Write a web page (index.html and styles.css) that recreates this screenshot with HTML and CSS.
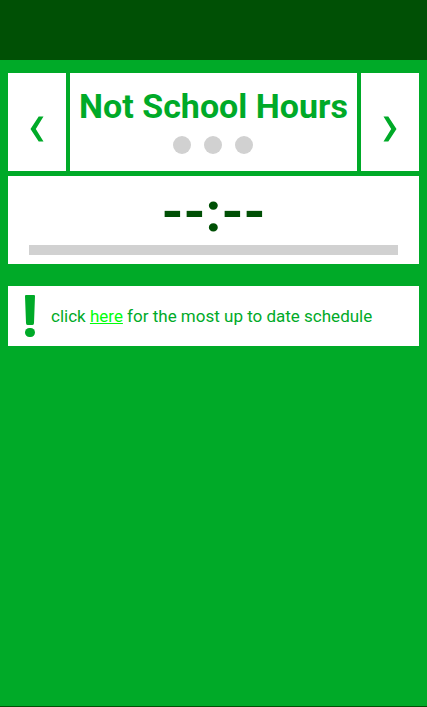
FILE: index.html
```html
<!DOCTYPE html>
<html lang="en">
<head>
<meta charset="utf-8">
<meta name="viewport" content="width=device-width, initial-scale=1">
<title>School Schedule</title>
<link rel="stylesheet" href="styles.css">
</head>
<body>
<header class="topbar"></header>
<main class="content">
  <section class="period">
    <button class="card nav" type="button" aria-label="Previous">
      <svg width="14" height="26" viewBox="0 0 14 26"><path d="M8.700 .5H13.500L5.800 13L13.500 25.500H8.700L.5 13Z"/></svg>
    </button>
    <div class="card current">
      <h1 class="title">Not School Hours</h1>
      <div class="dots"><span class="dot"></span><span class="dot"></span><span class="dot"></span></div>
    </div>
    <button class="card nav" type="button" aria-label="Next">
      <svg width="14" height="26" viewBox="0 0 14 26"><path d="M5.300 .5H.5L8.200 13L.5 25.500H5.300L13.500 13Z"/></svg>
    </button>
  </section>
  <section class="card timer">
    <div class="time">--:--</div>
    <div class="track"></div>
  </section>
  <section class="card notice">
    <svg class="alert" width="10" height="42" viewBox="0 0 10 42"><path d="M1 0H9Q10 0 10 1L9 28Q9 30 7.500 30H2.500Q1 30 1 28L0 1Q0 0 1 0Z"/><rect y="33" width="10" height="9" rx="4.500"/></svg>
    <p class="message">click <a class="link" href="#">here</a> for the most up to date schedule</p>
  </section>
</main>
<footer class="bottombar"></footer>
</body>
</html>
```
FILE: styles.css
```css
* { box-sizing: border-box; }

body {
  margin: 0;
  min-height: 100vh;
  display: flex;
  flex-direction: column;
  background: #00aa28;
  color: #00aa28;
  font-family: Roboto, sans-serif;
}

.topbar { height: 60px; background: #005005; }

.content { flex: 1; padding: 13px 8px; }

.card { background: #fff; }

.period {
  display: grid;
  grid-template-columns: 1fr 5fr 1fr;
  gap: 4px;
  margin-bottom: 5px;
}

.nav {
  display: flex;
  align-items: center;
  justify-content: center;
  border: 0;
  padding: 13px 0 0;
  color: inherit;
}

.nav svg, .alert { fill: currentColor; }

.current {
  padding: 13px 0 17px;
  text-align: center;
}

.title {
  margin: 0;
  font-size: 34px;
  line-height: 40px;
  font-weight: 700;
  white-space: nowrap;
}

.dots {
  display: flex;
  justify-content: center;
  gap: 13px;
  padding-top: 10px;
}

.dot {
  width: 18px;
  height: 18px;
  border-radius: 50%;
  background: #d1d1d1;
}

.timer {
  padding: 4px 21px 9px;
  margin-bottom: 22px;
}

.time {
  padding-bottom: 1px;
  color: #005005;
  font-size: 56px;
  line-height: 64px;
  font-weight: 700;
  text-align: center;
}

.track { height: 10px; background: #d1d1d1; }

.notice {
  display: flex;
  align-items: center;
  gap: 16px;
  padding: 9px 17px;
}

.message {
  margin: 0;
  font-size: 17px;
  line-height: 20px;
}

.link { color: #00ff0a; }

.bottombar { height: 1px; background: #005005; }
```
